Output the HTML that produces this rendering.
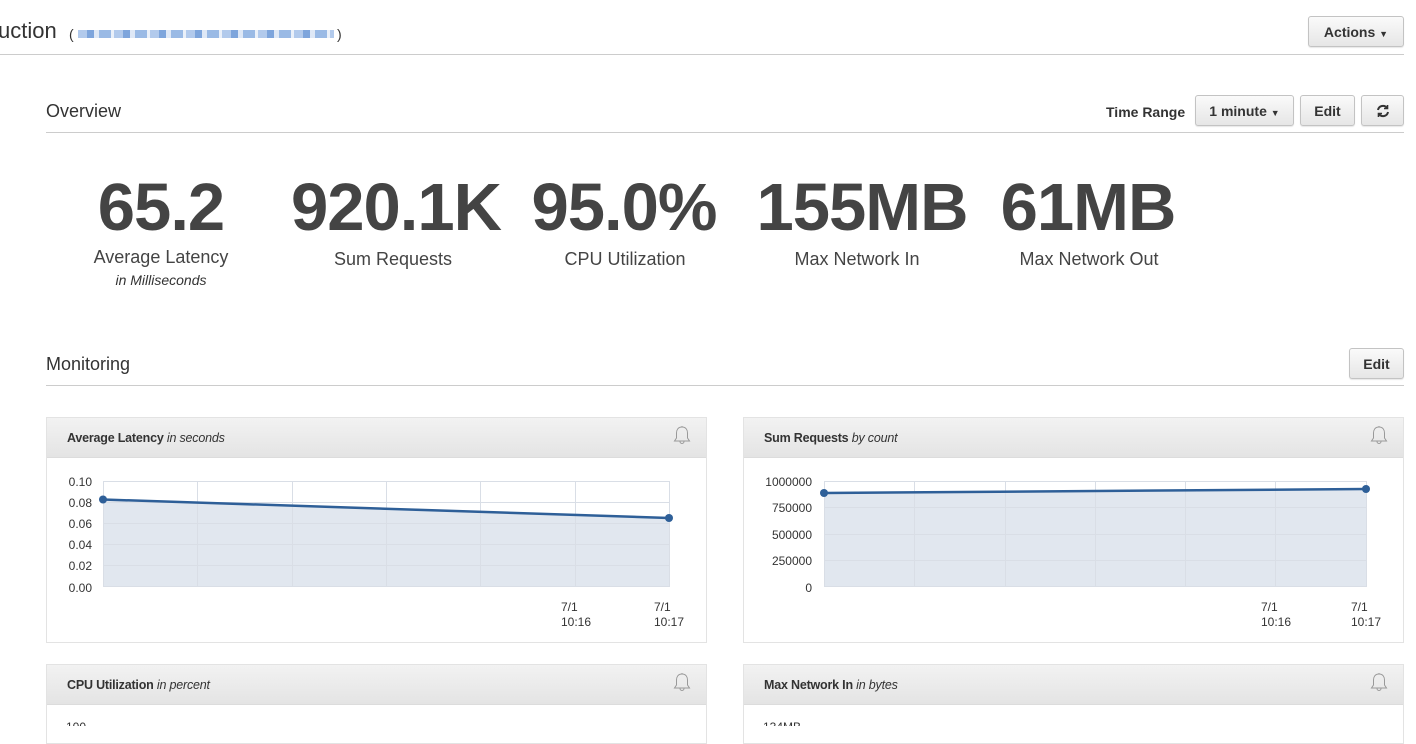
<!DOCTYPE html>
<html><head><meta charset="utf-8"><style>
*{margin:0;padding:0;box-sizing:border-box}
body{width:1416px;height:726px;overflow:hidden;background:#fff;font-family:"Liberation Sans",Arial,sans-serif;color:#333;position:relative}
.a{position:absolute}
.btn{position:absolute;border:1px solid #c3c3c3;border-radius:3px;background:linear-gradient(#fafafa,#e6e6e6);font-weight:bold;font-size:14px;color:#333;text-align:center;box-shadow:0 1px 1px rgba(0,0,0,.1)}
.hr{position:absolute;height:1px;background:#ccc}
.big{position:absolute;font-size:67px;font-weight:bold;color:#444;letter-spacing:-1px;text-align:center;width:300px;top:169px}
.lbl{position:absolute;font-size:18px;color:#444;text-align:center;width:300px;top:247px}
.panel{position:absolute;border:1px solid #e3e3e3;background:#fff}
.ph{height:40px;background:linear-gradient(#f2f2f2,#e4e4e4);border-bottom:1px solid #dcdcdc;font-size:12.5px;color:#333;padding:13px 0 0 20px;letter-spacing:-0.2px}
.ph b{font-weight:bold}.ph i{font-style:italic}
</style></head><body>
<div class="a" style="left:-2px;top:18px;font-size:22px;color:#333">uction</div>
<div class="a" style="left:69px;top:26px;font-size:14px;color:#333">(</div>
<div class="a" style="left:78px;top:30px;width:256px;height:8px;background:repeating-linear-gradient(90deg,#a9c4ea 0 9px,#6f9bd8 9px 16px,#dbe6f5 16px 21px,#8fb2e2 21px 33px,#e8eef8 33px 36px);opacity:.9"></div>
<div class="a" style="left:337px;top:26px;font-size:14px;color:#333">)</div>
<div class="btn" style="left:1308px;top:16px;width:96px;height:31px;line-height:30px">Actions <span style="font-size:9px">▼</span></div>
<div class="hr" style="left:0;top:54px;width:1404px"></div>

<div class="a" style="left:46px;top:101px;font-size:18px;color:#333">Overview</div>
<div class="a" style="left:1106px;top:104px;font-size:14px;font-weight:bold;color:#333">Time Range</div>
<div class="btn" style="left:1195px;top:95px;width:99px;height:31px;line-height:30px">1 minute <span style="font-size:9px">▼</span></div>
<div class="btn" style="left:1300px;top:95px;width:55px;height:31px;line-height:30px">Edit</div>
<div class="btn" style="left:1361px;top:95px;width:43px;height:31px"><svg width="14" height="14" viewBox="0 0 14 14" style="margin-top:8px" fill="none" stroke="#333" stroke-width="2"><path d="M2 6a5 5 0 0 1 9-2M12 8a5 5 0 0 1-9 2"/><path d="M11.5 1v3.5H8M2.5 13V9.5H6" stroke-width="1.6"/></svg></div>
<div class="hr" style="left:46px;top:132px;width:1358px"></div>

<div class="big" style="left:11px">65.2</div>
<div class="lbl" style="left:11px">Average Latency</div>
<div class="a" style="left:11px;width:300px;text-align:center;top:272px;font-size:14px;font-style:italic;color:#333">in Milliseconds</div>
<div class="big" style="left:246px">920.1K</div>
<div class="lbl" style="left:243px;top:249px">Sum Requests</div>
<div class="big" style="left:474px">95.0%</div>
<div class="lbl" style="left:475px;top:249px">CPU Utilization</div>
<div class="big" style="left:712px">155MB</div>
<div class="lbl" style="left:707px;top:249px">Max Network In</div>
<div class="big" style="left:938px">61MB</div>
<div class="lbl" style="left:939px;top:249px">Max Network Out</div>

<div class="a" style="left:46px;top:354px;font-size:18px;color:#333">Monitoring</div>
<div class="btn" style="left:1349px;top:348px;width:55px;height:31px;line-height:30px">Edit</div>
<div class="hr" style="left:46px;top:385px;width:1358px"></div>

<div class="panel" style="left:46px;top:417px;width:661px;height:226px"><div class="ph"><b>Average Latency</b> <i>in seconds</i></div></div>
<div class="panel" style="left:743px;top:417px;width:661px;height:226px"><div class="ph"><b>Sum Requests</b> <i>by count</i></div></div>
<div class="panel" style="left:46px;top:664px;width:661px;height:80px"><div class="ph"><b>CPU Utilization</b> <i>in percent</i></div></div>
<div class="panel" style="left:743px;top:664px;width:661px;height:80px"><div class="ph"><b>Max Network In</b> <i>in bytes</i></div></div>

<svg class="a" style="left:0;top:0" width="1416" height="726" font-family="Liberation Sans,Arial,sans-serif">
<g fill="none" stroke="#999" stroke-width="1">
<path d="M682 427c-4 0-5.5 3-5.5 6v5l-2 3h15l-2-3v-5c0-3-1.5-6-5.5-6zM680 441.5a2 2 0 0 0 4 0M682 426v1.5"/>
<path d="M1379 427c-4 0-5.5 3-5.5 6v5l-2 3h15l-2-3v-5c0-3-1.5-6-5.5-6zM1377 441.5a2 2 0 0 0 4 0M1379 426v1.5"/>
<path d="M682 674c-4 0-5.5 3-5.5 6v5l-2 3h15l-2-3v-5c0-3-1.5-6-5.5-6zM680 688.5a2 2 0 0 0 4 0M682 673v1.5"/>
<path d="M1379 674c-4 0-5.5 3-5.5 6v5l-2 3h15l-2-3v-5c0-3-1.5-6-5.5-6zM1377 688.5a2 2 0 0 0 4 0M1379 673v1.5"/>
</g>
<polygon points="103,499.5 669,518 669,587 103,587" fill="#e1e7ef"/>
<g stroke="#d9dee6" stroke-width="1">
<path d="M103 481.5H669M103 502.5H669M103 523.5H669M103 544.5H669M103 565.5H669M103 586.5H669"/>
<path d="M103.5 481V587M197.5 481V587M292.5 481V587M386.5 481V587M480.5 481V587M575.5 481V587M669.5 481V587"/>
</g>
<path d="M103 499.5L669 518" stroke="#2e5f98" stroke-width="2.5" fill="none"/>
<circle cx="103" cy="499.5" r="4" fill="#2e5f98"/><circle cx="669" cy="518" r="4" fill="#2e5f98"/>
<g font-size="12" fill="#333" text-anchor="end">
<text x="92" y="486">0.10</text><text x="92" y="507">0.08</text><text x="92" y="528">0.06</text><text x="92" y="549">0.04</text><text x="92" y="570">0.02</text><text x="92" y="592">0.00</text>
</g>
<g font-size="12" fill="#333">
<text x="561" y="611">7/1</text><text x="561" y="626">10:16</text>
<text x="654" y="611">7/1</text><text x="654" y="626">10:17</text>
</g>
<polygon points="824,493 1366,489 1366,587 824,587" fill="#e1e7ef"/>
<g stroke="#d9dee6" stroke-width="1">
<path d="M824 481.5H1366M824 507.5H1366M824 534.5H1366M824 560.5H1366M824 586.5H1366"/>
<path d="M824.5 481V587M914.5 481V587M1005.5 481V587M1095.5 481V587M1185.5 481V587M1275.5 481V587M1366.5 481V587"/>
</g>
<path d="M824 493L1366 489" stroke="#2e5f98" stroke-width="2.5" fill="none"/>
<circle cx="824" cy="493" r="4" fill="#2e5f98"/><circle cx="1366" cy="489" r="4" fill="#2e5f98"/>
<g font-size="12" fill="#333" text-anchor="end">
<text x="812" y="486">1000000</text><text x="812" y="512">750000</text><text x="812" y="539">500000</text><text x="812" y="565">250000</text><text x="812" y="592">0</text>
</g>
<g font-size="12" fill="#333">
<text x="1261" y="611">7/1</text><text x="1261" y="626">10:16</text>
<text x="1351" y="611">7/1</text><text x="1351" y="626">10:17</text>
</g>
<g font-size="12" fill="#333"><text x="66" y="731">100</text><text x="763" y="731">134MB</text></g>
</svg>
</body></html>
